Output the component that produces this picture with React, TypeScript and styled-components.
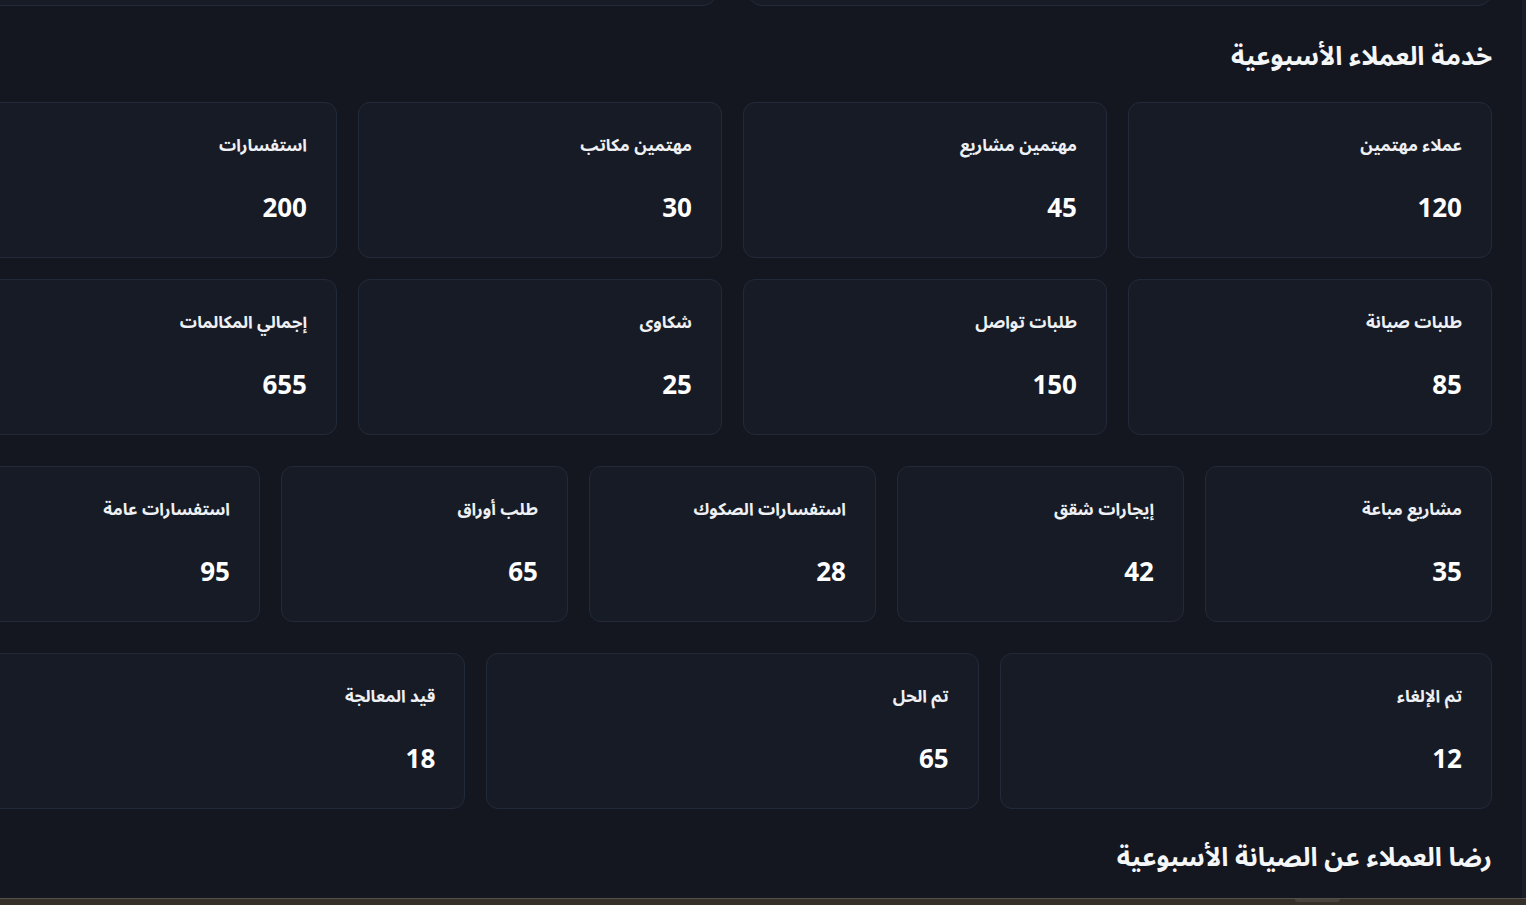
import styled, { createGlobalStyle } from "styled-components";

const GlobalStyle = createGlobalStyle`
  html, body {
    margin: 0;
    padding: 0;
    background: #141720;
  }
  body {
    font-family: "Noto Sans", "Noto Sans Arabic", "DejaVu Sans", sans-serif;
    color: #f3f4f6;
    overflow: hidden;
  }
`;

const Page = styled.div`
  direction: rtl;
  width: 100%;
  height: 905px;
  overflow: hidden;
  background: #141720;
  box-sizing: border-box;
  border-right: 4px solid #1a1e28;
`;

const Content = styled.main`
  width: 1519px;
  margin-right: 30px;
  margin-top: -314px;
  display: flex;
  flex-direction: column;
  gap: 31px;
`;

const ChartRow = styled.div`
  display: grid;
  grid-template-columns: 1fr 1fr;
  gap: 31px;
  margin-bottom: 2px;
`;

const ChartCard = styled.div`
  height: 318px;
  background: #171b26;
  border: 1px solid #222a3a;
  border-radius: 14px;
`;

const SectionTitle = styled.h2`
  margin: 0;
  font-size: 26px;
  line-height: 32px;
  font-weight: 700;
  color: #f5f6f8;
`;

const Grid = styled.div<{ $cols: number }>`
  display: grid;
  grid-template-columns: repeat(${(p) => p.$cols}, 1fr);
  gap: 21px;
`;

const Card = styled.div`
  box-sizing: border-box;
  height: 156px;
  background: #171b26;
  border: 1px solid #222a3a;
  border-radius: 12px;
  padding: 28px 29px 0;
  display: flex;
  flex-direction: column;
`;

const Label = styled.div`
  font-size: 17px;
  line-height: 28px;
  font-weight: 700;
  color: #eef0f4;
`;

const Value = styled.div`
  margin-top: 30px;
  font-size: 26px;
  line-height: 36px;
  font-weight: 700;
  color: #ffffff;
`;

const BottomBar = styled.div`
  position: fixed;
  left: 0;
  right: 0;
  bottom: 0;
  height: 6px;
  background: #35312a;
  border-top: 1px solid #55514a;
`;

const Thumb = styled.div`
  position: absolute;
  left: 1295px;
  top: 0;
  width: 45px;
  height: 3px;
  background: #48443d;
  border-radius: 0 0 3px 3px;
`;

type Stat = { label: string; value: number };

const first: Stat[] = [
  { label: "عملاء مهتمين", value: 120 },
  { label: "مهتمين مشاريع", value: 45 },
  { label: "مهتمين مكاتب", value: 30 },
  { label: "استفسارات", value: 200 },
  { label: "طلبات صيانة", value: 85 },
  { label: "طلبات تواصل", value: 150 },
  { label: "شكاوى", value: 25 },
  { label: "إجمالي المكالمات", value: 655 },
];

const second: Stat[] = [
  { label: "مشاريع مباعة", value: 35 },
  { label: "إيجارات شقق", value: 42 },
  { label: "استفسارات الصكوك", value: 28 },
  { label: "طلب أوراق", value: 65 },
  { label: "استفسارات عامة", value: 95 },
];

const third: Stat[] = [
  { label: "تم الإلغاء", value: 12 },
  { label: "تم الحل", value: 65 },
  { label: "قيد المعالجة", value: 18 },
];

const StatGrid = ({ items, cols }: { items: Stat[]; cols: number }) => (
  <Grid $cols={cols}>
    {items.map((s) => (
      <Card key={s.label}>
        <Label>{s.label}</Label>
        <Value>{s.value}</Value>
      </Card>
    ))}
  </Grid>
);

export default function App() {
  return (
    <>
      <GlobalStyle />
      <Page>
        <Content>
          <ChartRow>
            <ChartCard />
            <ChartCard />
          </ChartRow>
          <SectionTitle>خدمة العملاء الأسبوعية</SectionTitle>
          <StatGrid items={first} cols={4} />
          <StatGrid items={second} cols={5} />
          <StatGrid items={third} cols={3} />
          <SectionTitle>رضا العملاء عن الصيانة الأسبوعية</SectionTitle>
        </Content>
      </Page>
      <BottomBar>
        <Thumb />
      </BottomBar>
    </>
  );
}
